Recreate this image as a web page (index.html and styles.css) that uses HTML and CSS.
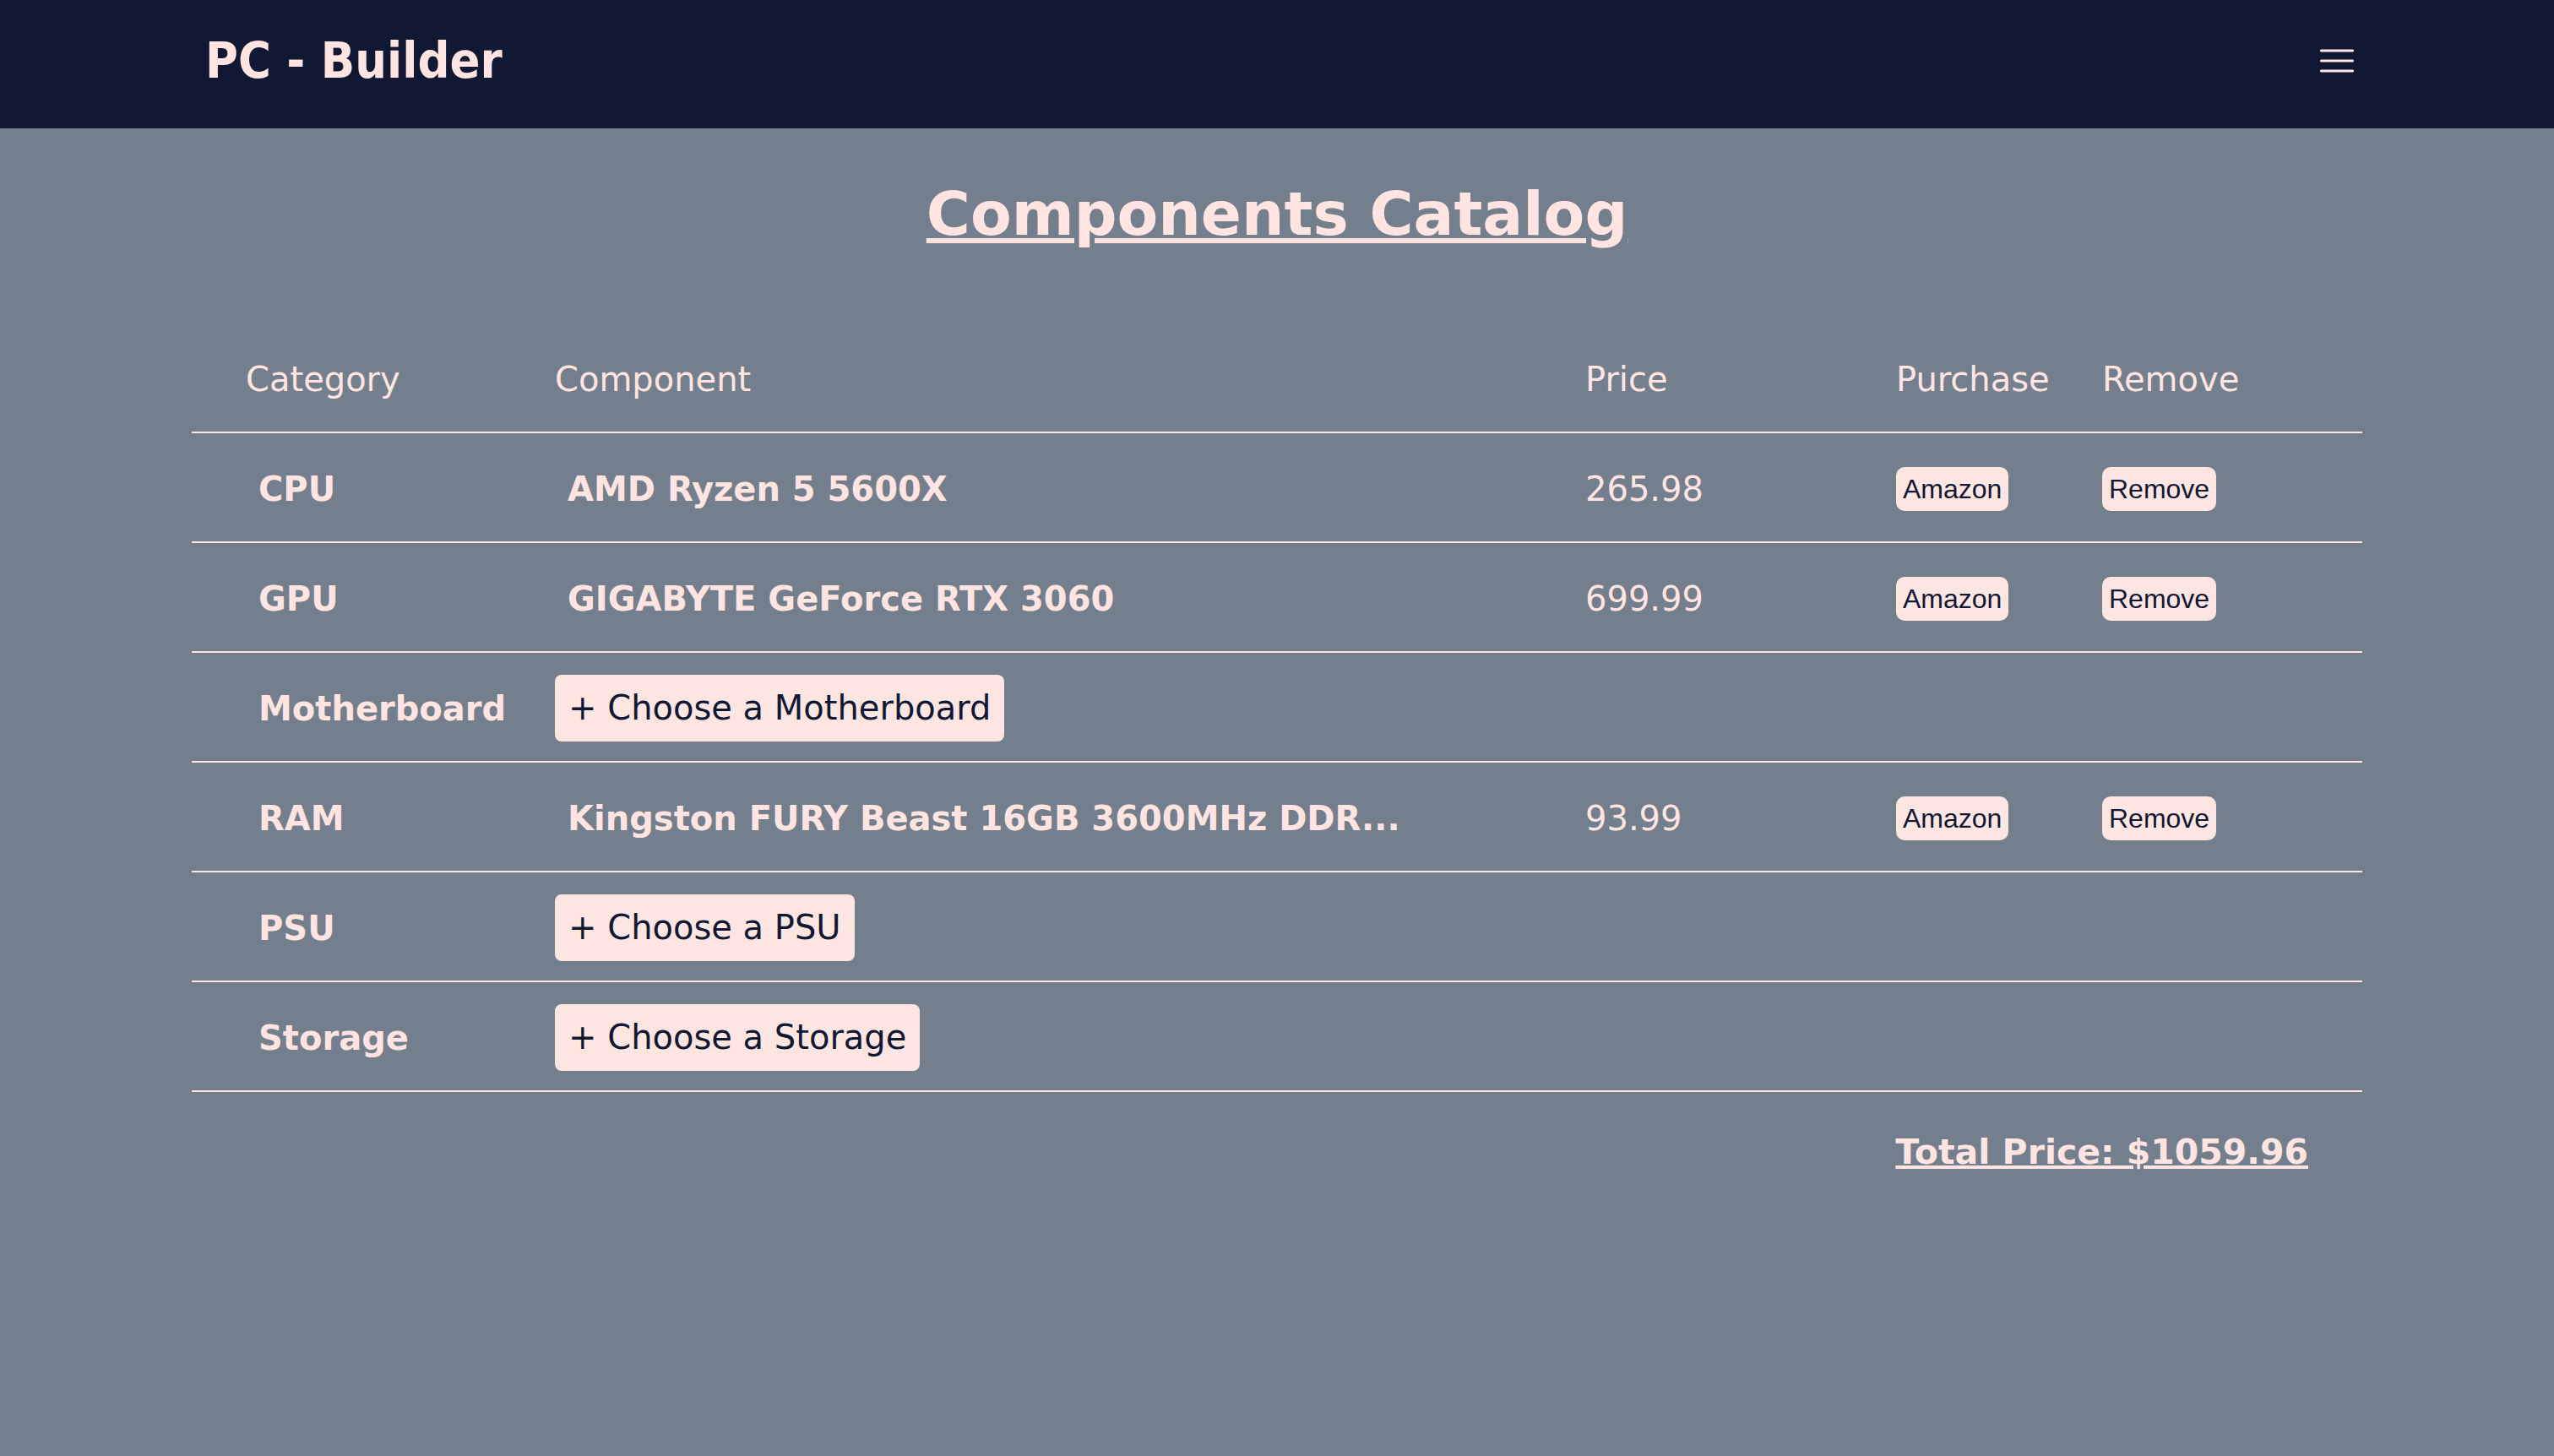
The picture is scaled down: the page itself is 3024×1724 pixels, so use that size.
FILE: index.html
```html
<!DOCTYPE html>
<html lang="en">
<head>
<meta charset="utf-8">
<title>PC - Builder</title>
<link rel="stylesheet" href="styles.css">
</head>
<body>
<header class="navbar">
  <div class="brand">PC - Builder</div>
  <button class="toggler" aria-label="Menu">
    <svg width="44" height="30" viewBox="0 0 44 30">
      <path d="M3.5 3h37M3.5 15h37M3.5 27h37" stroke="#ffe4e1" stroke-width="3.2" stroke-linecap="round" fill="none"/>
    </svg>
  </button>
</header>
<main class="page">
  <h1 class="title">Components Catalog</h1>
  <table class="parts">
    <colgroup>
      <col class="c-cat"><col class="c-comp"><col class="c-price"><col class="c-buy"><col class="c-rm">
    </colgroup>
    <thead>
      <tr><th>Category</th><th>Component</th><th>Price</th><th>Purchase</th><th>Remove</th></tr>
    </thead>
    <tbody>
      <tr>
        <td><span class="name">CPU</span></td>
        <td><span class="name">AMD Ryzen 5 5600X</span></td>
        <td>265.98</td>
        <td><button class="small-btn">Amazon</button></td>
        <td><button class="small-btn">Remove</button></td>
      </tr>
      <tr>
        <td><span class="name">GPU</span></td>
        <td><span class="name">GIGABYTE GeForce RTX 3060</span></td>
        <td>699.99</td>
        <td><button class="small-btn">Amazon</button></td>
        <td><button class="small-btn">Remove</button></td>
      </tr>
      <tr>
        <td><span class="name">Motherboard</span></td>
        <td><button class="choose-btn">+ Choose a Motherboard</button></td>
        <td></td><td></td><td></td>
      </tr>
      <tr>
        <td><span class="name">RAM</span></td>
        <td><span class="name">Kingston FURY Beast 16GB 3600MHz DDR...</span></td>
        <td>93.99</td>
        <td><button class="small-btn">Amazon</button></td>
        <td><button class="small-btn">Remove</button></td>
      </tr>
      <tr>
        <td><span class="name">PSU</span></td>
        <td><button class="choose-btn">+ Choose a PSU</button></td>
        <td></td><td></td><td></td>
      </tr>
      <tr>
        <td><span class="name">Storage</span></td>
        <td><button class="choose-btn">+ Choose a Storage</button></td>
        <td></td><td></td><td></td>
      </tr>
    </tbody>
  </table>
  <p class="total">Total Price: $1059.96</p>
</main>
</body>
</html>
```
FILE: styles.css
```css
html, body {
  margin: 0;
  padding: 0;
}
body {
  background: #737f8c;
  color: #ffe4e1;
  font-family: "DejaVu Sans", Verdana, sans-serif;
  min-height: 1724px;
}
.navbar {
  box-sizing: border-box;
  height: 152px;
  background: #111833;
  display: flex;
  align-items: center;
  justify-content: space-between;
  padding: 0 235px 8px 243px;
}
.brand {
  font-family: "DejaVu Sans Condensed", "DejaVu Sans", sans-serif;
  font-stretch: condensed;
  font-weight: bold;
  font-size: 59px;
  line-height: 70px;
  color: #ffe4e1;
}
.toggler {
  background: none;
  border: none;
  padding: 0;
  margin: 0;
  display: flex;
  cursor: pointer;
}
.page {
  padding-top: 60px;
}
.title {
  margin: 0 0 87px;
  text-align: center;
  font-size: 71px;
  line-height: 84px;
  font-weight: bold;
  text-decoration: underline;
  text-decoration-thickness: 6px;
  text-underline-offset: 4px;
}
.parts {
  width: 2570px;
  margin: 0 auto;
  table-layout: fixed;
  border-collapse: separate;
  border-spacing: 0;
  font-size: 40px;
}
.c-cat { width: 366px; }
.c-comp { width: 1220px; }
.c-price { width: 368px; }
.c-buy { width: 244px; }
.c-rm { width: 372px; }
.parts th,
.parts td {
  box-sizing: border-box;
  height: 130px;
  padding: 3px 0 0 64px;
  text-align: left;
  vertical-align: middle;
  border-bottom: 2px solid #ffe4e1;
  white-space: nowrap;
}
.parts th {
  font-weight: normal;
}
.name {
  font-weight: bold;
  padding-left: 15px;
}
.small-btn {
  font-family: "Liberation Sans", Arial, sans-serif;
  font-size: 32px;
  line-height: 38px;
  padding: 7px 8px;
  margin: 0;
  border: none;
  border-radius: 10px;
  background: #fde5e2;
  color: #111833;
  vertical-align: middle;
}
.choose-btn {
  font-family: "DejaVu Sans", Verdana, sans-serif;
  font-size: 40px;
  line-height: 47px;
  padding: 16px;
  margin: 0;
  border: none;
  border-radius: 8px;
  background: #fde5e2;
  color: #111833;
  vertical-align: middle;
}
.total {
  width: 2570px;
  box-sizing: border-box;
  margin: 48px auto 0;
  padding-right: 64px;
  text-align: right;
  font-size: 41px;
  line-height: 47px;
  font-weight: bold;
  text-decoration: underline;
  text-decoration-thickness: 4px;
  text-underline-offset: 2px;
}
```
